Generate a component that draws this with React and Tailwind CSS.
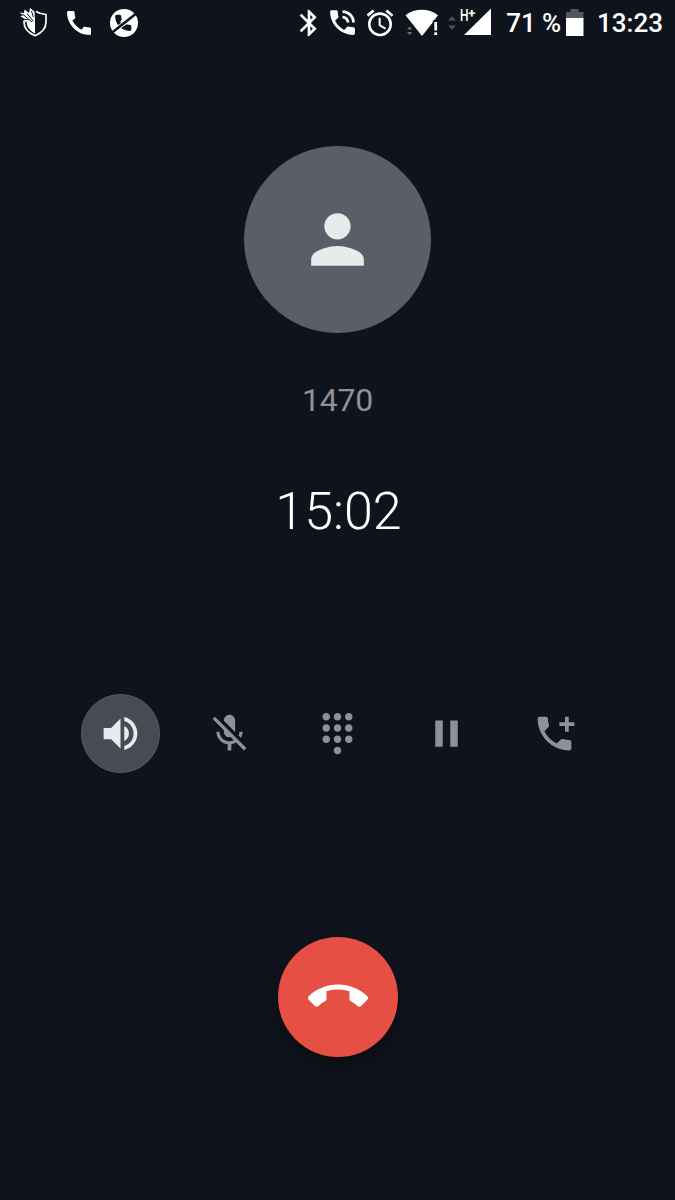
import React from "react";
import {
  MdAccessAlarm,
  MdBluetooth,
  MdCall,
  MdCallEnd,
  MdDialpad,
  MdMicOff,
  MdPause,
  MdPerson,
  MdPhoneInTalk,
  MdVolumeUp,
} from "react-icons/md";

const ShieldIcon = () => (
  <svg width="32" height="32" viewBox="0 0 32 32" className="shrink-0">
    <path
      d="M18 4.500c3 1.800 6 2.700 10 3V15c0 6-4.500 11-11 13.700C10.500 26 6 21 6 15v-1"
      fill="none"
      stroke="#fff"
      strokeWidth="1.700"
    />
    <path d="M8.500 14 17 11.500V26.500C12 24 8.700 20 8.500 14Z" fill="#fff" />
    <path
      d="M1.500 5.500 6 6l.5-3.500L11 6l1-5 4.500 3.500L17 14l-6 1.500-6-1.500 2.500-1.500L2 9l3.500-.5Z"
      fill="#fff"
    />
    <path
      d="M4.500 7 14 15M9 6.500l6.500 8M13.500 4l1.800 6M7 12.500l3.500.300"
      fill="none"
      stroke="#0f131c"
      strokeWidth="1"
    />
  </svg>
);

const BlockedCallIcon = () => (
  <svg width="28" height="28" viewBox="0 0 28 28" className="shrink-0">
    <circle cx="14" cy="14" r="14" fill="#fff" />
    <path
      transform="translate(3.400 4) scale(.82)"
      d="M20.010 15.380c-1.230 0-2.420-.2-3.530-.56-.35-.12-.74-.030-1.010.24l-1.570 1.970c-2.830-1.350-5.480-3.900-6.890-6.830l1.950-1.660c.27-.28.35-.67.24-1.020-.37-1.110-.56-2.300-.56-3.530 0-.54-.45-.99-.99-.99H4.190C3.650 3 3 3.240 3 3.990 3 13.280 10.730 21 20.010 21c.71 0 .99-.63.99-1.180v-3.450c0-.54-.45-.99-.99-.99z"
      fill="#0f131c"
      stroke="#0f131c"
      strokeWidth="1.800"
    />
    <path d="M7 19.800 21 8.700" stroke="#fff" strokeWidth="4.200" />
    <path d="M2.500 23.200 27.500 3.400" stroke="#0f131c" strokeWidth="2.600" />
  </svg>
);

const WifiIcon = () => (
  <svg width="35" height="32" viewBox="0 0 35 32" className="shrink-0">
    <path d="M.5 8.200C10 .9 23.500.9 33 8.200L28.500 14v.5L17 29Z" fill="#fff" />
    <path d="M27.800 13.500H34V29h-6.200z" fill="#0f131c" />
    <path d="M29.300 15h2.800v8.500h-2.800zM29.300 25.300h2.800V28h-2.800z" fill="#fff" />
    <path d="m2 22.500 2.700-3.200 2.700 3.200zM2 25l2.700 3.200L7.400 25z" fill="#6b6d72" />
  </svg>
);

const SignalIcon = () => (
  <div className="relative">
    <svg width="46" height="32" viewBox="0 0 46 32" className="shrink-0">
      <path d="m1 13.500 4-4.200 4 4.200zM1 18.500l4 4.200 4-4.200z" fill="#4e5057" />
      <path d="M44 1.500V28H17Z" fill="#fff" />
    </svg>
    <div className="absolute top-px left-[13px] flex items-start font-medium">
      <span className="w-[8px] origin-left scale-x-75 text-[16px] leading-[16px]">H</span>
      <span className="text-[13px] leading-[11px] font-bold">+</span>
    </div>
  </div>
);

const BatteryIcon = () => (
  <svg width="18" height="28" viewBox="0 0 18 28" className="shrink-0">
    <path d="M4.500 0h8v3H17.500v7H0V3h4.500Z" fill="#54565d" />
    <path d="M0 9h17.500V27H0z" fill="#fff" />
  </svg>
);

const AddCallIcon = ({ size }) => (
  <svg width={size} height={size} viewBox="0 0 24 24" fill="currentColor" className="overflow-visible">
    <path d="M20 15.500c-1.250 0-2.450-.2-3.570-.57-.35-.11-.74-.03-1.020.24l-2.200 2.200c-2.830-1.440-5.150-3.750-6.590-6.590l2.200-2.210c.28-.26.36-.65.25-1C8.700 6.450 8.500 5.250 8.500 4c0-.55-.45-1-1-1H4c-.55 0-1 .45-1 1 0 9.390 7.610 17 17 17 .55 0 1-.45 1-1v-3.500c0-.55-.45-1-1-1z" />
    <path d="M17.600 3h2v3h3v2h-3v3h-2V8h-3V6h3z" />
  </svg>
);

const actions = [
  { name: "speaker", Icon: MdVolumeUp, active: true },
  { name: "mute", Icon: MdMicOff },
  { name: "keypad", Icon: MdDialpad },
  { name: "hold", Icon: MdPause },
  { name: "add", Icon: AddCallIcon },
];

const StatusBar = () => (
  <div className="flex h-[45px] w-full items-center justify-between pr-[12px] pl-[18px]">
    <div className="flex items-center">
      <ShieldIcon />
      <MdCall size={32} className="ml-[12.500px]" />
      <div className="ml-[15px]">
        <BlockedCallIcon />
      </div>
    </div>
    <div className="flex items-center">
      <MdBluetooth size={32} />
      <MdPhoneInTalk size={33} className="ml-px" />
      <MdAccessAlarm size={32} className="mr-[9px] ml-[5px]" />
      <WifiIcon />
      <div className="ml-[7px]">
        <SignalIcon />
      </div>
      <span className="mt-px ml-[13px] text-[26px] leading-none font-medium tracking-[-0.1px] whitespace-nowrap">
        71 %
      </span>
      <div className="mr-[13px] ml-[5px]">
        <BatteryIcon />
      </div>
      <span className="mt-px text-[26px] leading-none font-medium">13:23</span>
    </div>
  </div>
);

const App = () => {
  return (
    <div className="flex h-[1200px] w-[675px] flex-col items-center overflow-hidden bg-[#0f131c] font-['Roboto',sans-serif] text-white">
      <StatusBar />

      <div className="mt-[101.400px] flex size-[187px] items-center justify-center rounded-full bg-[#5a5e68]">
        <MdPerson size={79} className="text-[#e9eaec]" />
      </div>

      <p className="mt-[48.600px] text-[32px] leading-[36px] tracking-[-0.200px] text-[#8f9196]">1470</p>
      <p className="mt-[64px] ml-[2px] text-[52px] leading-[60px] font-light">15:02</p>

      <div className="mt-[152px] flex gap-[29.500px]">
        {actions.map(({ name, Icon, active }) => (
          <button
            key={name}
            className={
              active
                ? "flex size-[79px] items-center justify-center rounded-full border border-[#5a5c65] bg-[#494b54] text-[#e9eaec]"
                : "flex size-[79px] items-center justify-center rounded-full text-[#8f9196]"
            }
          >
            <Icon size={45} />
          </button>
        ))}
      </div>

      <button className="mt-[164px] flex size-[120px] items-center justify-center rounded-full bg-[#e64f44] shadow-[0_8px_16px_rgba(0,0,0,0.35)]">
        <MdCallEnd size={60} />
      </button>
    </div>
  );
};

export default App;
